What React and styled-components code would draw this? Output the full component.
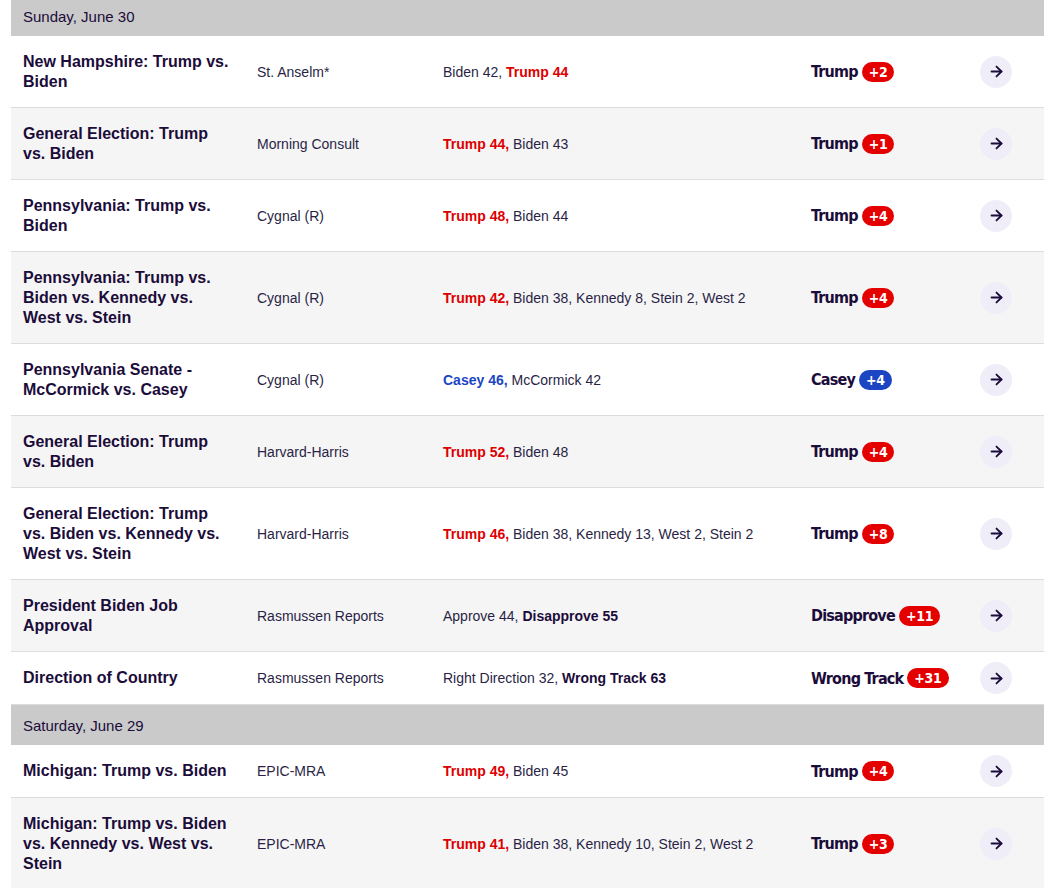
import React from "react";
import styled, { createGlobalStyle } from "styled-components";
import { ArrowRight } from "lucide-react";

const GlobalStyle = createGlobalStyle`
  body {
    margin: 0;
    background: #fff;
    font-family: "Liberation Sans", Arial, sans-serif;
    color: #1b0c3a;
  }
`;

const RED = "#dd0000";
const BLUE = "#1c45c4";

const days = [
  {
    date: "Sunday, June 30",
    polls: [
      {
        race: "New Hampshire: Trump vs. Biden",
        pollster: "St. Anselm*",
        results: [["Biden", 42], ["Trump", 44, "r"]],
        leader: "Trump",
        spread: "+2",
        party: "r",
      },
      {
        race: "General Election: Trump vs. Biden",
        pollster: "Morning Consult",
        results: [["Trump", 44, "r"], ["Biden", 43]],
        leader: "Trump",
        spread: "+1",
        party: "r",
      },
      {
        race: "Pennsylvania: Trump vs. Biden",
        pollster: "Cygnal (R)",
        results: [["Trump", 48, "r"], ["Biden", 44]],
        leader: "Trump",
        spread: "+4",
        party: "r",
      },
      {
        race: "Pennsylvania: Trump vs. Biden vs. Kennedy vs. West vs. Stein",
        pollster: "Cygnal (R)",
        results: [["Trump", 42, "r"], ["Biden", 38], ["Kennedy", 8], ["Stein", 2], ["West", 2]],
        leader: "Trump",
        spread: "+4",
        party: "r",
      },
      {
        race: "Pennsylvania Senate - McCormick vs. Casey",
        pollster: "Cygnal (R)",
        results: [["Casey", 46, "d"], ["McCormick", 42]],
        leader: "Casey",
        spread: "+4",
        party: "d",
      },
      {
        race: "General Election: Trump vs. Biden",
        pollster: "Harvard-Harris",
        results: [["Trump", 52, "r"], ["Biden", 48]],
        leader: "Trump",
        spread: "+4",
        party: "r",
      },
      {
        race: "General Election: Trump vs. Biden vs. Kennedy vs. West vs. Stein",
        pollster: "Harvard-Harris",
        results: [["Trump", 46, "r"], ["Biden", 38], ["Kennedy", 13], ["West", 2], ["Stein", 2]],
        leader: "Trump",
        spread: "+8",
        party: "r",
      },
      {
        race: "President Biden Job Approval",
        pollster: "Rasmussen Reports",
        results: [["Approve", 44], ["Disapprove", 55, "n"]],
        leader: "Disapprove",
        spread: "+11",
        party: "r",
      },
      {
        race: "Direction of Country",
        pollster: "Rasmussen Reports",
        results: [["Right Direction", 32], ["Wrong Track", 63, "n"]],
        leader: "Wrong Track",
        spread: "+31",
        party: "r",
      },
    ],
  },
  {
    date: "Saturday, June 29",
    polls: [
      {
        race: "Michigan: Trump vs. Biden",
        pollster: "EPIC-MRA",
        results: [["Trump", 49, "r"], ["Biden", 45]],
        leader: "Trump",
        spread: "+4",
        party: "r",
      },
      {
        race: "Michigan: Trump vs. Biden vs. Kennedy vs. West vs. Stein",
        pollster: "EPIC-MRA",
        results: [["Trump", 41, "r"], ["Biden", 38], ["Kennedy", 10], ["Stein", 2], ["West", 2]],
        leader: "Trump",
        spread: "+3",
        party: "r",
      },
    ],
  },
];

function App() {
  return (
    <>
      <GlobalStyle />
      <Table>
        {days.map((day) => (
          <section key={day.date}>
            <DayHeader>{day.date}</DayHeader>
            {day.polls.map((poll, i) => (
              <Row key={i} $shaded={i % 2 === 1}>
                <Race>{poll.race}</Race>
                <Pollster>{poll.pollster}</Pollster>
                <Results>
                  {poll.results.map(([name, value, tone], j) => {
                    const last = j === poll.results.length - 1;
                    const text = `${name} ${value}${last ? "" : ","}`;
                    return (
                      <React.Fragment key={name}>
                        {tone ? <Winner $tone={tone}>{text}</Winner> : text}
                        {last ? "" : " "}
                      </React.Fragment>
                    );
                  })}
                </Results>
                <Spread>
                  {poll.leader}
                  <Badge $party={poll.party}>{poll.spread}</Badge>
                </Spread>
                <ArrowButton aria-label="Open poll">
                  <ArrowRight size={17} strokeWidth={2.6} />
                </ArrowButton>
              </Row>
            ))}
          </section>
        ))}
      </Table>
    </>
  );
}

export default App;

const Table = styled.div`
  margin: -4px 0 0 11px;
`;

const DayHeader = styled.div`
  height: 40px;
  display: flex;
  align-items: center;
  padding-left: 12px;
  background: #cacaca;
  font-size: 15px;
  color: #1b0c3a;
`;

const Row = styled.div`
  display: grid;
  grid-template-columns: 234px 186px 368px 169px 32px;
  align-items: center;
  padding: 10px 0 10px 12px;
  background: ${(p) => (p.$shaded ? "#f5f5f5" : "#fff")};
  border-bottom: 1px solid #dcdcdc;
`;

const Race = styled.div`
  padding: 5.5px 26px 5.5px 0;
  font-size: 16px;
  line-height: 20px;
  font-weight: 700;
  color: #1b0c3a;
`;

const Pollster = styled.div`
  font-size: 14px;
  color: #2a1f45;
`;

const Results = styled.div`
  font-size: 14px;
  color: #2a1f45;
`;

const Winner = styled.strong`
  font-weight: 700;
  color: ${(p) => (p.$tone === "r" ? RED : p.$tone === "d" ? BLUE : "#1b0c3a")};
`;

const Spread = styled.div`
  display: flex;
  align-items: center;
  gap: 4px;
  font-family: "DejaVu Sans Condensed", "Liberation Sans", sans-serif;
  font-size: 16px;
  letter-spacing: -0.8px;
  font-weight: 700;
  color: #1b0c3a;
`;

const Badge = styled.span`
  display: inline-flex;
  align-items: center;
  height: 20px;
  padding: 0 7px;
  border-radius: 10px;
  background: ${(p) => (p.$party === "d" ? BLUE : "#e50000")};
  color: #fff;
  font-size: 14px;
  font-weight: 700;
  letter-spacing: -0.3px;
`;

const ArrowButton = styled.button`
  width: 32px;
  height: 32px;
  border: 0;
  padding: 0;
  border-radius: 50%;
  background: #efeef8;
  color: #1b0c3a;
  display: flex;
  align-items: center;
  justify-content: center;
  cursor: pointer;
`;
